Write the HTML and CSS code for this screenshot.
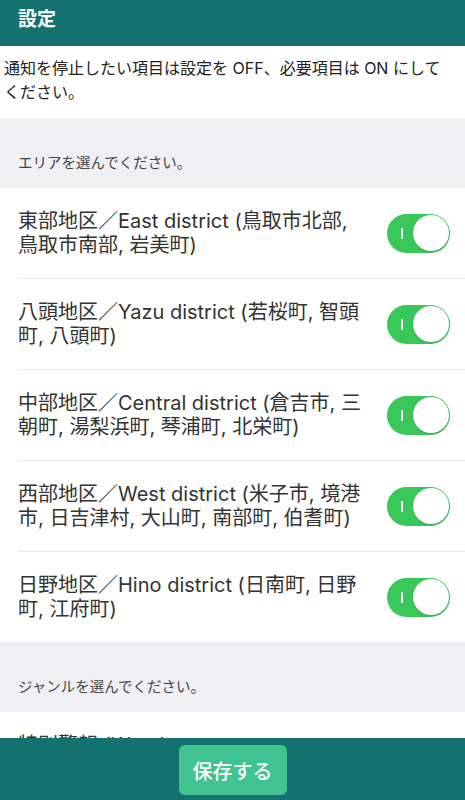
FILE: index.html
```html
<!DOCTYPE html>
<html lang="ja">
<head>
<meta charset="utf-8">
<title>設定</title>
<link rel="stylesheet" href="styles.css">
</head>
<body>
<header class="topbar"><h1 class="topbar-title">設定</h1></header>
<main class="content">
  <p class="intro">通知を停止したい項目は設定を OFF、必要項目は ON にしてください。</p>

  <div class="section-head">エリアを選んでください。</div>
  <ul class="list">
    <li class="row"><span class="row-label">東部地区／East district (鳥取市北部, 鳥取市南部, 岩美町)</span><span class="toggle"><span class="toggle-mark"></span><span class="toggle-knob"></span></span></li>
    <li class="row"><span class="row-label">八頭地区／Yazu district (若桜町, 智頭町, 八頭町)</span><span class="toggle"><span class="toggle-mark"></span><span class="toggle-knob"></span></span></li>
    <li class="row"><span class="row-label">中部地区／Central district (倉吉市, 三朝町, 湯梨浜町, 琴浦町, 北栄町)</span><span class="toggle"><span class="toggle-mark"></span><span class="toggle-knob"></span></span></li>
    <li class="row"><span class="row-label">西部地区／West district (米子市, 境港市, 日吉津村, 大山町, 南部町, 伯耆町)</span><span class="toggle"><span class="toggle-mark"></span><span class="toggle-knob"></span></span></li>
    <li class="row"><span class="row-label">日野地区／Hino district (日南町, 日野町, 江府町)</span><span class="toggle"><span class="toggle-mark"></span><span class="toggle-knob"></span></span></li>
  </ul>

  <div class="section-head">ジャンルを選んでください。</div>
  <ul class="list">
    <li class="row"><span class="row-label">特別警報 (Weather emergency warning)</span><span class="toggle"><span class="toggle-mark"></span><span class="toggle-knob"></span></span></li>
  </ul>
</main>
<footer class="bottombar"><button class="save-btn" type="button">保存する</button></footer>
</body>
</html>
```

FILE: styles.css
```css
* { box-sizing: border-box; }
html, body { margin: 0; padding: 0; }
body {
  width: 465px;
  height: 800px;
  background: #ffffff;
  color: #333333;
  font-family: Inter, "Noto Sans CJK JP", sans-serif;
  overflow: hidden;
}
.topbar {
  height: 46px;
  background: #137170;
  display: flex;
  align-items: center;
  padding: 0 18px;
}
.topbar-title {
  margin: -6px 0 0;
  font-size: 19px;
  font-weight: bold;
  color: #ffffff;
  line-height: 24px;
}
.content { height: 754px; overflow: hidden; }
.intro {
  margin: 0;
  padding: 10px 16px 14px 4px;
  font-size: 16px;
  line-height: 24px;
  color: #222222;
  background: #ffffff;
}
.section-head {
  background: #efeff4;
  height: 70px;
  padding: 0 18px 15px;
  display: flex;
  align-items: flex-end;
  font-size: 14.5px;
  line-height: 20px;
  color: #444444;
}
.list {
  list-style: none;
  margin: 0;
  padding: 0 0 0 18px;
  background: #ffffff;
}
.row {
  display: flex;
  align-items: center;
  min-height: 91px;
  padding: 20px 15px 20px 0;
  border-bottom: 1px solid #e6e6e6;
}
.row:last-child { border-bottom: none; min-height: 90px; }
.row-label {
  flex: 1;
  font-size: 20px;
  line-height: 24px;
  color: #333333;
  padding-right: 18px;
}
.toggle {
  flex: none;
  width: 63px;
  height: 39px;
  border-radius: 20px;
  background: #39c75a;
  display: flex;
  align-items: center;
  justify-content: space-between;
  padding: 0 1px 0 14px;
}
.toggle-mark {
  width: 2px;
  height: 11px;
  background: #ffffff;
  border-radius: 1px;
}
.toggle-knob {
  width: 36px;
  height: 36px;
  border-radius: 50%;
  background: #ffffff;
  box-shadow: 0 1px 2px rgba(0,0,0,0.15);
}
.bottombar {
  position: fixed;
  left: 0;
  right: 0;
  bottom: 0;
  height: 62px;
  background: #137170;
  display: flex;
  justify-content: center;
  padding-top: 7px;
}
.save-btn {
  width: 108px;
  height: 50px;
  border: none;
  border-radius: 6px;
  background: #40c391;
  color: #ffffff;
  font-family: "Noto Sans CJK JP", sans-serif;
  font-size: 20px;
  font-weight: 500;
  padding: 0;
}
```
